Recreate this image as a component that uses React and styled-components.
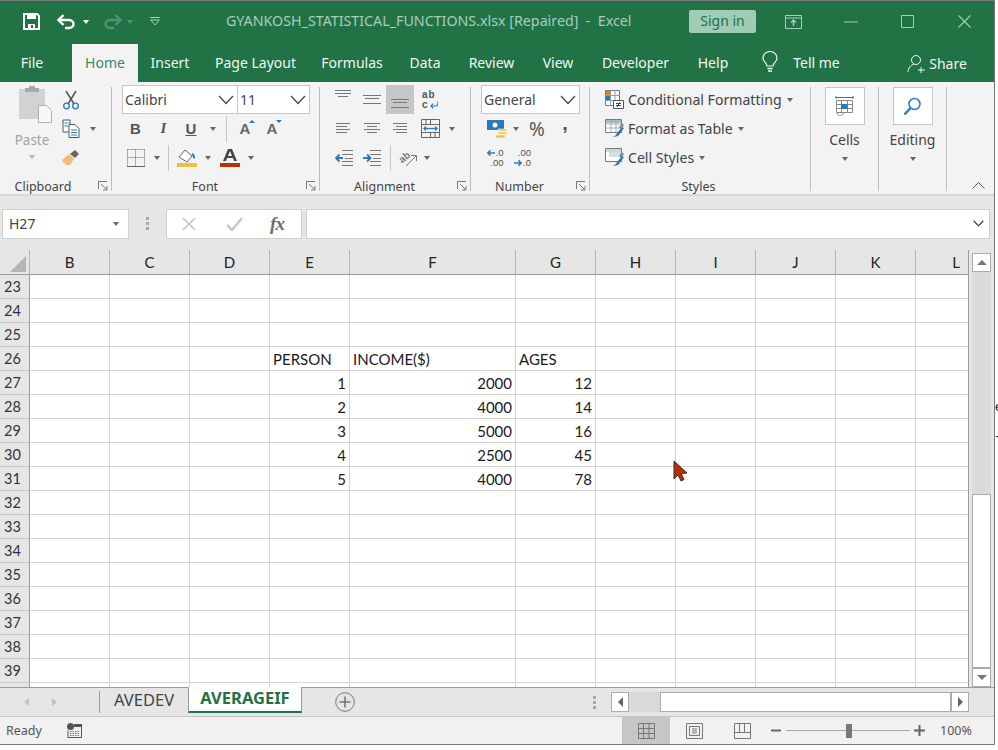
import React from "react";
import styled, { createGlobalStyle } from "styled-components";

const GREEN = "#217346";
const UI_FONT = `"Noto Sans", "Open Sans", sans-serif`;
const CELL_FONT = `Lato, "Liberation Sans", sans-serif`;

const GlobalStyle = createGlobalStyle`
  html, body { margin: 0; padding: 0; background: #fff; }
  * { box-sizing: border-box; }
`;

const COLUMNS = [
  ["B", 80], ["C", 80], ["D", 80], ["E", 80], ["F", 166], ["G", 80],
  ["H", 80], ["I", 80], ["J", 80], ["K", 80], ["L", 53],
];

const DATA = {
  26: { E: ["PERSON"], F: ["INCOME($)"], G: ["AGES"] },
  27: { E: [1, 1], F: [2000, 1], G: [12, 1] },
  28: { E: [2, 1], F: [4000, 1], G: [14, 1] },
  29: { E: [3, 1], F: [5000, 1], G: [16, 1] },
  30: { E: [4, 1], F: [2500, 1], G: [45, 1] },
  31: { E: [5, 1], F: [4000, 1], G: [78, 1] },
};

// row 40 only shows its top sliver above the sheet tabs, so no label
const ROWS = Array.from({ length: 18 }, (_, i) => 23 + i);

const Page = styled.div`
  position: relative;
  width: 998px;
  height: 750px;
  overflow: hidden;
  background: #fff;
`;

const Window = styled.div`
  width: 995px;
  height: 745px;
  display: flex;
  flex-direction: column;
  border-top: 1px solid #777;
  border-right: 1px solid #777;
  border-bottom: 1px solid #777;
  font-family: ${UI_FONT};
  background: #e6e6e6;
`;

/* title bar */
const TitleBar = styled.div`
  height: 41px;
  flex: none;
  display: flex;
  align-items: center;
  background: ${GREEN};
`;

const QatItem = styled.span`
  width: ${(p) => p.$w}px;
  margin-left: ${(p) => p.$ml || 0}px;
  flex: none;
  display: flex;
  justify-content: center;
  align-items: center;
`;

const DocTitle = styled.div`
  margin-left: 65px;
  width: 463px;
  flex: none;
  padding-bottom: 2px;
  font-size: 14.25px;
  color: #a8cdb9;
  white-space: pre;
`;

const SignIn = styled.div`
  width: 67px;
  height: 23px;
  margin-right: 9px;
  flex: none;
  border-radius: 2px;
  background: #a0ccb5;
  color: ${GREEN};
  font-size: 14px;
  line-height: 22px;
  text-align: center;
`;

const WinButton = styled.span`
  width: 57px;
  flex: none;
  display: flex;
  justify-content: center;
`;

const TabStrip = styled.div`
  height: 40px;
  flex: none;
  display: flex;
  align-items: flex-end;
  padding-left: 7px;
  background: ${GREEN};
  color: #f0f6f2;
`;

const Tab = styled.div`
  width: ${(p) => p.$w}px;
  height: 38px;
  flex: none;
  display: flex;
  align-items: center;
  justify-content: center;
  gap: ${(p) => p.$gap || 0}px;
  margin-left: ${(p) => p.$ml || 0}px;
  padding-bottom: ${(p) => (p.$low ? 0 : 2)}px;
  font-size: 14px;
  background: ${(p) => (p.$active ? "#f3f3f3" : "transparent")};
  color: ${(p) => (p.$active ? "#3d8761" : "inherit")};
`;

/* ribbon */
const Ribbon = styled.div`
  height: 114px;
  flex: none;
  display: flex;
  background: #f3f3f3;
  border-bottom: 2px solid #d9d9d9;
  color: #444;
`;

const Group = styled.div`
  width: ${(p) => p.$w}px;
  flex: none;
  display: flex;
  flex-direction: column;
`;

const GroupBody = styled.div`
  height: 94px;
  flex: none;
  padding: 3px 0 0 ${(p) => p.$pl || 0}px;
`;

const GroupLabel = styled.div`
  display: grid;
  grid-template-columns: 1fr auto 1fr;
  align-items: center;
  height: 20px;
  flex: none;
  font-size: 12.5px;
  color: #444;
  padding-right: 3px;
`;

const LabelText = styled.span`
  grid-column: 2;
  position: relative;
  left: ${(p) => p.$shift || 0}px;
`;

const Launcher = styled.span`
  grid-column: 3;
  justify-self: end;
  display: flex;
`;

const GroupSep = styled.div`
  width: 1px;
  height: 104px;
  margin-top: 5px;
  flex: none;
  background: #bdbdbd;
`;

const ToolRow = styled.div`
  height: 29px;
  display: flex;
  align-items: center;
`;

const Combo = styled.div`
  width: ${(p) => p.$w}px;
  height: 29px;
  flex: none;
  display: flex;
  align-items: center;
  justify-content: space-between;
  padding: 0 3px 0 2px;
  background: #fff;
  border: 1px solid #c6c6c6;
  border-left-width: ${(p) => (p.$joined ? 0 : 1)}px;
  font-size: 14px;
  color: #444;
`;

const Tool = styled.span`
  width: ${(p) => p.$w || 28}px;
  height: ${(p) => (p.$on ? 29 : 24)}px;
  margin-left: ${(p) => p.$ml || 0}px;
  flex: none;
  display: flex;
  align-items: center;
  justify-content: center;
  background: ${(p) => (p.$on ? "#c6c6c6" : "transparent")};
`;

const Caret = styled.span`
  width: 0;
  height: 0;
  flex: none;
  border-left: 3.5px solid transparent;
  border-right: 3.5px solid transparent;
  border-top: 4px solid ${(p) => p.$color || "#666"};
`;

const ToolSep = styled.span`
  width: 1px;
  height: 26px;
  margin: 0 4px;
  flex: none;
  background: #c6c6c6;
`;

const FontLetter = styled.span`
  font-family: ${(p) => (p.$serif ? `"Liberation Serif", serif` : `"Liberation Sans", sans-serif`)};
  font-size: 15px;
  font-weight: 700;
  font-style: ${(p) => (p.$italic ? "italic" : "normal")};
  text-decoration: ${(p) => (p.$under ? "underline" : "none")};
  color: #555;
`;

const Grow = styled.span`
  position: relative;
  font-family: "Liberation Sans", sans-serif;
  font-size: 15px;
  font-weight: 700;
  color: #666;
`;

const GrowMark = styled.span`
  position: absolute;
  top: 0;
  right: -5px;
  border-left: 3px solid transparent;
  border-right: 3px solid transparent;
  ${(p) => (p.$down ? "border-top" : "border-bottom")}: 3px solid #2b79b8;
`;

const PercentSign = styled.span`
  font-size: 19px;
  color: #555;
`;

const CommaSign = styled.span`
  font-family: "Liberation Sans", sans-serif;
  font-weight: 700;
  font-size: 20px;
  line-height: 20px;
  color: #555;
  position: relative;
  top: -6px;
`;

const Decimals = styled.span`
  width: 17px;
  display: flex;
  flex-direction: column;
  font-family: "Liberation Sans", sans-serif;
  font-size: 9.5px;
  line-height: 10px;
  color: #555;
`;

const DecimalLine = styled.span`
  display: flex;
  align-items: center;
  justify-content: flex-end;
  gap: 1px;
`;

const WrapStack = styled.span`
  display: flex;
  flex-direction: column;
  width: 16px;
  font-family: "Liberation Sans", sans-serif;
  font-size: 10px;
  font-weight: 700;
  line-height: 10px;
  letter-spacing: 1px;
  color: #555;
`;

const WrapLine = styled.span`
  display: flex;
  align-items: center;
  gap: 1px;
`;

const PasteBtn = styled.div`
  width: 40px;
  flex: none;
  display: flex;
  flex-direction: column;
  align-items: center;
  color: #a3a3a3;
  font-size: 13.5px;
  line-height: 18px;
`;

const PasteIcon = styled.span`
  display: flex;
  margin-left: 5px;
`;

const PasteLabel = styled.span`
  margin: 8px 0 6px;
`;

const ClipRow = styled.div`
  display: flex;
  padding-left: 12px;
`;

const SmallCol = styled.div`
  margin-left: 5px;
`;

const StyleRow = styled.div`
  height: 29px;
  display: flex;
  align-items: center;
  gap: 4px;
  font-size: 14.1px;
  color: #444;
`;

const StyleCaret = styled(Caret)`
  margin-left: 1px;
`;

const BigGroupBody = styled.div`
  height: 94px;
  flex: none;
  padding-top: 5px;
  display: flex;
  flex-direction: column;
  align-items: center;
  font-size: 14px;
  color: #444;
`;

const BigIcon = styled.div`
  width: 40px;
  height: 38px;
  margin-bottom: 5px;
  display: flex;
  align-items: center;
  justify-content: center;
  background: #fff;
  border: 1px solid #c6c6c6;
`;

const BigCaret = styled(Caret)`
  margin-top: 8px;
`;

const CollapseSlot = styled.div`
  flex: 1;
  display: flex;
  justify-content: flex-end;
  align-items: flex-end;
  padding: 0 9px 5px 0;
`;

/* formula bar */
const FormulaBar = styled.div`
  height: 54px;
  flex: none;
  display: flex;
  align-items: center;
  padding: 1px 4px 0 2px;
  background: #e6e6e6;
`;

const FieldBox = styled.div`
  height: 30px;
  width: ${(p) => (p.$w ? `${p.$w}px` : "auto")};
  flex: ${(p) => (p.$w ? "none" : "1")};
  display: flex;
  align-items: center;
  background: #fff;
  border: 1px solid #d0d0d0;
`;

const NameBox = styled(FieldBox)`
  justify-content: space-between;
  padding: 0 9px 0 6px;
  font-size: 14px;
  color: #444;
`;

const Grip = styled.span`
  width: 37px;
  flex: none;
  display: flex;
  flex-direction: column;
  align-items: center;
  gap: 2px;
  i {
    width: 3px;
    height: 3px;
    background: #a8a8a8;
  }
`;

const FnButton = styled.span`
  width: ${(p) => p.$w}px;
  flex: none;
  display: flex;
  justify-content: center;
  font-family: "Liberation Serif", serif;
  font-style: italic;
  font-weight: 700;
  font-size: 19px;
  letter-spacing: -1px;
  color: #6e6e6e;
`;

const FormulaInput = styled(FieldBox)`
  margin-left: 4px;
  justify-content: flex-end;
  padding-right: 5px;
`;

/* sheet */
const SheetArea = styled.div`
  height: 437px;
  flex: none;
  display: flex;
`;

const SheetGrid = styled.div`
  width: 969px;
  height: 437px;
  flex: none;
  overflow: hidden;
  display: grid;
  grid-template-columns: 30px ${COLUMNS.map((c) => `${c[1]}px`).join(" ")};
  grid-template-rows: 25px repeat(18, 24px);
  background: #fff;
  border-right: 1px solid #9b9b9b;
  font-family: ${CELL_FONT};
  font-size: 15px;
`;

const Corner = styled.div`
  display: flex;
  align-items: flex-end;
  justify-content: flex-end;
  padding: 0 3px 2px 0;
  background: #e6e6e6;
  border-right: 1px solid #b5b5b5;
  border-bottom: 1px solid #9b9b9b;
`;

const ColHead = styled.div`
  display: flex;
  align-items: center;
  justify-content: center;
  padding-left: ${(p) => (p.$last ? 27 : 0)}px;
  font-size: 15px;
  color: #222;
  background: #e6e6e6;
  border-right: ${(p) => (p.$last ? 0 : 1)}px solid #b5b5b5;
  border-bottom: 1px solid #9b9b9b;
`;

const RowHead = styled.div`
  display: flex;
  align-items: center;
  padding-left: 4px;
  font-size: 14.5px;
  color: #333;
  background: #e6e6e6;
  border-right: 1px solid #9b9b9b;
  border-bottom: 1px solid #c8c8c8;
`;

const Cell = styled.div`
  display: flex;
  align-items: center;
  justify-content: ${(p) => (p.$num ? "flex-end" : "flex-start")};
  padding: 0 3px;
  color: #1a1a1a;
  white-space: nowrap;
  border-right: ${(p) => (p.$last ? 0 : 1)}px solid #d4d4d4;
  border-bottom: 1px solid #d4d4d4;
`;

const VScroll = styled.div`
  flex: 1;
  padding: 3px 3px 0;
  display: flex;
  flex-direction: column;
  background: #e6e6e6;
`;

const VTrack = styled.div`
  flex: 1;
  display: flex;
  flex-direction: column;
  background: #dadada;
`;

const VThumb = styled.div`
  height: 174px;
  margin-top: auto;
  background: #fff;
  border: 1px solid #ababab;
`;

const ScrollBtn = styled.div`
  width: ${(p) => p.$w || 19}px;
  height: ${(p) => p.$h || 19}px;
  flex: none;
  display: flex;
  align-items: center;
  justify-content: center;
  background: #fff;
  border: 1px solid #ababab;
`;

const Arrow = styled.span`
  width: 0;
  height: 0;
  ${(p) =>
    ({
      up: "border-left:5px solid transparent;border-right:5px solid transparent;border-bottom:5px solid #777;",
      down: "border-left:5px solid transparent;border-right:5px solid transparent;border-top:5px solid #777;",
      left: "border-top:5px solid transparent;border-bottom:5px solid transparent;border-right:5px solid #666;",
      right: "border-top:5px solid transparent;border-bottom:5px solid transparent;border-left:5px solid #666;",
    })[p.$dir]}
`;

/* sheet tabs */
const SheetBar = styled.div`
  height: 29px;
  flex: none;
  display: flex;
  align-items: stretch;
  background: #e6e6e6;
  border-top: 1px solid #9b9b9b;
  position: relative;
`;

const NavArrows = styled.div`
  width: 99px;
  flex: none;
  display: flex;
  align-items: center;
  gap: 23px;
  padding-left: 24px;
`;

const NavArrow = styled.span`
  width: 0;
  height: 0;
  border-top: 4px solid transparent;
  border-bottom: 4px solid transparent;
  ${(p) => (p.$right ? "border-left" : "border-right")}: 5px solid #c0c0c0;
`;

const SheetTab = styled.div`
  width: ${(p) => p.$w}px;
  height: ${(p) => (p.$active ? 26 : 22)}px;
  margin-top: ${(p) => (p.$active ? -1 : 3)}px;
  flex: none;
  display: flex;
  align-items: center;
  justify-content: center;
  padding-bottom: ${(p) => (p.$active ? 3 : 5)}px;
  font-size: 16.5px;
  font-weight: ${(p) => (p.$active ? 700 : 400)};
  color: ${(p) => (p.$active ? GREEN : "#444")};
  background: ${(p) => (p.$active ? "#fff" : "transparent")};
  border-left: 1px solid #9b9b9b;
  border-right: ${(p) => (p.$active ? "1px solid #9b9b9b" : "0")};
  border-bottom: ${(p) => (p.$active ? `2px solid ${GREEN}` : "0")};
`;

const AddSheet = styled.div`
  width: 86px;
  flex: none;
  display: flex;
  align-items: center;
  justify-content: center;
`;

const DotGrip = styled(Grip)`
  width: 18px;
  margin-left: 197px;
  justify-content: center;
`;

const HScroll = styled.div`
  width: 358px;
  height: 20px;
  margin-top: 4px;
  margin-left: 8px;
  flex: none;
  display: flex;
  background: #d9d9d9;
`;

const HThumb = styled.div`
  width: 291px;
  margin-left: 31px;
  flex: none;
  background: #fff;
  border: 1px solid #ababab;
`;

/* status bar */
const StatusBar = styled.div`
  flex: 1;
  display: flex;
  align-items: center;
  background: #f1f1f1;
  border-top: 1px solid #c6c6c6;
  font-size: 12.5px;
  color: #555;
`;

const Ready = styled.span`
  width: 67px;
  flex: none;
  padding-left: 6px;
`;

const MacroSlot = styled.span`
  width: 555px;
  flex: none;
  display: flex;
`;

const ViewBtn = styled.span`
  width: 48px;
  height: 100%;
  flex: none;
  display: flex;
  align-items: center;
  justify-content: center;
  background: ${(p) => (p.$on ? "#c6c6c6" : "transparent")};
`;

const ZoomSignSlot = styled.span`
  margin-left: ${(p) => p.$ml || 0}px;
  flex: none;
  display: flex;
`;

const ZoomSlider = styled.div`
  width: 124px;
  height: 11px;
  margin: 0 4px;
  flex: none;
  display: flex;
  justify-content: center;
  align-items: center;
  background: linear-gradient(#a8a8a8, #a8a8a8) center / 100% 1px no-repeat;
`;

const ZoomThumb = styled.span`
  width: 6px;
  height: 14px;
  margin-left: 1px;
  background: #777;
`;

const ZoomPct = styled.span`
  margin-left: 15px;
  font-size: 12.5px;
  color: #555;
`;

/* things lying over the window */
const Pointer = styled.svg`
  position: absolute;
  left: 672px;
  top: 460px;
`;

const OffWindow = styled.span`
  position: absolute;
  left: 995px;
  top: ${(p) => p.$top}px;
  font-family: ${CELL_FONT};
  font-size: 14px;
  line-height: 14px;
  color: #222;
`;

/* icons */
const Save = () => (
  <svg width="17" height="17" viewBox="0 0 17 17">
    <path d="M1 1h13l2 2v13H1z" fill="none" stroke="#fff" strokeWidth="2" />
    <path d="M4 1h9v5H4zM5 11h7v5H5z" fill="#fff" />
    <path d="M8 12h2v3H8z" fill={GREEN} />
  </svg>
);
const Undo = ({ color = "#fff" }) => (
  <svg width="19" height="16" viewBox="0 0 19 16">
    <path d="M1 6h11c6 0 6 8 0 8H8" fill="none" stroke={color} strokeWidth="2.4" />
    <path d="M6.5 1 1.5 6l5 5" fill="none" stroke={color} strokeWidth="2.4" />
  </svg>
);
const Redo = () => (
  <svg width="19" height="16" viewBox="0 0 19 16">
    <path d="M18 6H7c-6 0-6 8 0 8h4" fill="none" stroke="#4f9472" strokeWidth="2.4" />
    <path d="m12.5 1 5 5-5 5" fill="none" stroke="#4f9472" strokeWidth="2.4" />
  </svg>
);
const Customize = () => (
  <svg width="10" height="9" viewBox="0 0 10 9">
    <path d="M0 .5h10M.7 3l4.3 5 4.3-5z" fill="none" stroke="#a8cdb9" />
  </svg>
);
const Restore = () => (
  <svg width="17" height="14" viewBox="0 0 17 14" fill="none" stroke="#a8cdb9">
    <path d="M.5.5h16v13H.5zM1 3h15" />
    <path d="M8.5 11V5M6 7.5 8.5 5 11 7.5" strokeWidth="1.4" />
  </svg>
);
const Minimize = () => (
  <svg width="14" height="2" viewBox="0 0 14 2">
    <path d="M0 1h14" stroke="#a8cdb9" />
  </svg>
);
const Maximize = () => (
  <svg width="13" height="13" viewBox="0 0 13 13">
    <path d="M.5.5h12v12H.5z" fill="none" stroke="#a8cdb9" />
  </svg>
);
const Close = () => (
  <svg width="13" height="13" viewBox="0 0 13 13">
    <path d="m.5.5 12 12M12.5.5l-12 12" stroke="#a8cdb9" strokeWidth="1.1" />
  </svg>
);
const Bulb = () => (
  <svg width="16" height="22" viewBox="0 0 16 22" fill="none" stroke="#f0f6f2">
    <path d="M5 15c0-3-4-4-4-8a7 6.5 0 0 1 14 0c0 4-4 5-4 8z" strokeWidth="1.2" />
    <path d="M5.5 17.5h5M6 20h4" strokeWidth="1.3" />
  </svg>
);
const Person = () => (
  <svg width="19" height="19" viewBox="0 0 19 19" fill="none" stroke="#f0f6f2">
    <circle cx="9" cy="6" r="4.5" />
    <path d="M1 18c0-4 3-7 6-8M14 13v6M11 16h7" />
  </svg>
);
const Chevron = ({ small }) => (
  <svg width={small ? 11 : 16} height={small ? 7 : 10} viewBox="0 0 16 10">
    <path d="m1 1 7 7.5L15 1" fill="none" stroke="#444" strokeWidth={small ? 1.8 : 1.2} />
  </svg>
);
const LauncherIcon = () => (
  <svg width="10" height="10" viewBox="0 0 10 10" fill="none" stroke="#777">
    <path d="M.5 8V.5H9" />
    <path d="m3 3 5.5 5.5M9 5v4H5" />
  </svg>
);
const ClipBoard = () => (
  <svg width="36" height="38" viewBox="0 0 36 38">
    <path d="M2 4h26v30H2z" fill="#d2d2d2" />
    <path d="M8 3h4V1h6v2h4v4H8z" fill="#a8a8a8" />
    <path d="M21.5 20.5h8l5 5v12h-13z" fill="#f7f7f7" stroke="#b0b0b0" />
  </svg>
);
const Scissors = () => (
  <svg width="18" height="20" viewBox="0 0 18 20" fill="none">
    <path d="m4 1 8 13M14 1 6 14" stroke="#555" strokeWidth="1.5" />
    <circle cx="4.5" cy="16" r="2.8" stroke="#2b79b8" strokeWidth="1.3" />
    <circle cx="13.5" cy="16" r="2.8" stroke="#2b79b8" strokeWidth="1.3" />
  </svg>
);
const Copy = () => (
  <svg width="18" height="19" viewBox="0 0 18 19" fill="none">
    <path d="M1 1h7v12H1z" fill="#fff" stroke="#555" />
    <path d="M7 5.5h6l4 4v9H7z" fill="#fff" stroke="#555" />
    <path d="M2.5 4h4M2.5 7h4M9 11h6M9 13.5h6M9 16h6" stroke="#2b79b8" />
  </svg>
);
const Brush = () => (
  <svg width="18" height="17" viewBox="0 0 18 17">
    <path d="M0 11 7 5l5 5-4 6c-3 1-6-1-8-5z" fill="#eebe79" />
    <path d="m8 5 5-4 4 4-4 4z" fill="#666" />
  </svg>
);
const Borders = () => (
  <svg width="18" height="18" viewBox="0 0 18 18" fill="none" stroke="#666">
    <path d="M.5.5h17M.5.5v17M17.5.5v17M8.5.5v17M.5 8.5h17" strokeDasharray="1 1" />
    <path d="M0 17.5h18" />
  </svg>
);
const FillColor = () => (
  <svg width="20" height="19" viewBox="0 0 20 19">
    <path d="m2 9 6-7 7 6-5 6z" fill="#fff" stroke="#666" />
    <path d="M15 5c3 1 4 5 2 6-1-2-2-3-2-6z" fill="#2b79b8" />
    <path d="M0 15h20v4H0z" fill="#ecc13c" />
  </svg>
);
const FontColor = () => (
  <svg width="20" height="19" viewBox="0 0 20 19">
    <path d="M8 1h4l5 12h-3l-1-3H7l-1 3H3zm2 2L8 8h4z" fill="#444" fillRule="evenodd" />
    <path d="M0 15h20v4H0z" fill="#be2f00" />
  </svg>
);
const Lines = ({ rows }) => (
  <svg width="18" height="20" viewBox="0 0 18 20">
    {rows.map(([y, x1, x2]) => (
      <path key={y} d={`M${x1} ${y}.5H${x2}`} stroke="#777" />
    ))}
  </svg>
);
const WrapArrow = () => (
  <svg width="9" height="8" viewBox="0 0 9 8" fill="none" stroke="#2b79b8" strokeWidth="1.2">
    <path d="M8.5 0v2.5c0 1.5-1 2.5-2.5 2.5H1M3.5 2.5 1 5l2.5 2.5" />
  </svg>
);
const Merge = () => (
  <svg width="19" height="19" viewBox="0 0 19 19" fill="none">
    <path d="M.5.5h18v18H.5zM.5 5.5h18M.5 13.5h18M9.5.5v5M9.5 13.5v5M5 .5v5M14 13.5v5" stroke="#666" />
    <path d="M3 9.5h13" stroke="#2b79b8" strokeWidth="1.3" />
    <path d="M5 7.5l-2 2 2 2M14 7.5l2 2-2 2" stroke="#2b79b8" strokeWidth="1.3" />
  </svg>
);
const Indent = ({ flip }) => (
  <svg width="18" height="16" viewBox="0 0 18 16" fill="none">
    <path d="M7 .5h11M7 4.5h11M10 8.5h8M7 11.5h11M7 15.5h11" stroke="#777" />
    {flip ? (
      <path d="M0 8h7M4 4.5 7.5 8 4 11.5" stroke="#2b79b8" strokeWidth="1.8" />
    ) : (
      <path d="M8 8H1M4.5 4.5 1 8l3.500 3.500" stroke="#2b79b8" strokeWidth="1.8" />
    )}
  </svg>
);
const Orientation = () => (
  <svg width="20" height="18" viewBox="0 0 20 18">
    <text
      x="1"
      y="12"
      transform="rotate(-38 6 9)"
      fontFamily="Liberation Sans, sans-serif"
      fontSize="10"
      fontWeight="700"
      fill="#777"
    >
      ab
    </text>
    <path d="m8 17 10-10M13 6.500h5.500V12" fill="none" stroke="#777" />
  </svg>
);
const Currency = () => (
  <svg width="21" height="20" viewBox="0 0 21 20">
    <path d="M0 1h17v10H0z" fill="#2b79b8" />
    <circle cx="8" cy="6" r="2.5" fill="#fff" />
    <path d="M11 10h9v2h-9zM11 13h9v2h-9zM9 16h9v3H9z" fill="#ecc13c" stroke="#fff" strokeWidth=".5" />
  </svg>
);
const DecimalArrow = ({ right }) => (
  <svg width="8" height="8" viewBox="0 0 9 8" fill="none" stroke="#2b79b8" strokeWidth="1.7">
    {right ? <path d="M0 4h8M5 1l3 3-3 3" /> : <path d="M9 4H1M4 1 1 4l3 3" />}
  </svg>
);
const CondFormat = () => (
  <svg width="19" height="19" viewBox="0 0 19 19" fill="none">
    <path d="M.5.5h14v15H.5z" stroke="#777" fill="#fff" />
    <path d="M1 1h5v4H1z" fill="#d08b3a" />
    <path d="M1 6h5v4H1z" fill="#2b79b8" />
    <path d="M5.5.5v15M10 .5v15M.5 5.5h14M.5 10.5h14" stroke="#999" />
    <path d="M8.5 10.5h10v8h-10z" fill="#fff" stroke="#555" />
    <path d="M11 13.5h5M11 15.5h5M12 17l3-5" stroke="#444" />
  </svg>
);
const FormatTable = ({ plain }) => (
  <svg width="19" height="19" viewBox="0 0 19 19" fill="none">
    <path d="M.5.5h16v13H.5z" stroke="#777" fill="#fff" />
    <path d="M1 1h15v3H1z" fill={plain ? "#c9dbd6" : "#9fbfc9"} />
    {plain ? (
      <path d="M4 4h12v5H4z" fill="#cfe0e4" />
    ) : (
      <path d="M6 .5v13M11 .5v13M.5 5h16M.5 9h16" stroke="#aaa" />
    )}
    <path d="M7 17c3 1 4-1 5-3l5-6 2 1-5 7c-2 2-5 2-7 1z" fill="#2b79b8" />
    <path d="m14 8 3-4 2 2-3 4z" fill="#888" />
  </svg>
);
const CellsIcon = () => (
  <svg width="19" height="21" viewBox="0 0 19 21" fill="none">
    <path d="M1 1.5h17M1 0v3M18 0v3" stroke="#2b79b8" />
    <path d="M1.5 4.5h16v12h-16zM1.5 8.5h16M1.5 12.5h16M6.5 4.5v12M12.5 4.5v12" stroke="#888" />
    <path d="M6.5 8h6v5h-6z" fill="#2b79b8" />
    <path d="M2 17c0 2 3 3 5 2l2-2" stroke="#999" />
  </svg>
);
const Magnifier = () => (
  <svg width="19" height="19" viewBox="0 0 19 19" fill="none" stroke="#2b79b8">
    <circle cx="11.5" cy="7" r="5.5" strokeWidth="1.5" />
    <path d="M7.5 11 1.5 17.5" strokeWidth="2.5" />
  </svg>
);
const CollapseChevron = () => (
  <svg width="13" height="7" viewBox="0 0 13 7">
    <path d="m.5 6.5 6-6 6 6" fill="none" stroke="#555" />
  </svg>
);
const Cross = () => (
  <svg width="14" height="14" viewBox="0 0 14 14">
    <path d="m1 1 12 12M13 1 1 13" stroke="#c6c6c6" strokeWidth="1.6" />
  </svg>
);
const Tick = () => (
  <svg width="17" height="14" viewBox="0 0 17 14">
    <path d="m1 8 5 5L16 1" fill="none" stroke="#c6c6c6" strokeWidth="2.4" />
  </svg>
);
const CornerMark = () => (
  <svg width="16" height="16" viewBox="0 0 16 16">
    <path d="M16 0v16H0z" fill="#b5b5b5" />
  </svg>
);
const AddCircle = () => (
  <svg width="20" height="20" viewBox="0 0 20 20" fill="none" stroke="#777">
    <circle cx="10" cy="10" r="9.3" />
    <path d="M10 4.5v11M4.5 10h11" strokeWidth="1.6" />
  </svg>
);
const Macro = () => (
  <svg width="15" height="15" viewBox="0 0 15 15">
    <circle cx="3.5" cy="3.5" r="3.5" fill="#555" />
    <path d="M1 7.5v7h13.5V1.5H7" fill="none" stroke="#555" />
    <path d="M7 1h8v3H7z" fill="#555" />
    <path d="M3 8.5h10M3 10.5h10M3 12.5h10" stroke="#777" strokeDasharray="1.5 1" />
  </svg>
);
const NormalView = () => (
  <svg width="17" height="16" viewBox="0 0 17 16" fill="none" stroke="#777">
    <path d="M.5.5h16v15H.5zM.5 5.5h16M.5 10.5h16M5.5.5v15M11 .5v15" />
  </svg>
);
const PageView = () => (
  <svg width="17" height="16" viewBox="0 0 17 16" fill="none" stroke="#777">
    <path d="M.5.5h16v15H.5z" />
    <path d="M3.5 3.5h10v9h-10zM6 6h5M6 8h5M6 10h5" />
  </svg>
);
const BreakView = () => (
  <svg width="17" height="16" viewBox="0 0 17 16" fill="none" stroke="#777">
    <path d="M.5.5h16v15H.5zM.5 9.5h10v-9M5.5.5v9M10.5 9.5h6" />
  </svg>
);
const ZoomSign = ({ plus }) => (
  <svg width="11" height="11" viewBox="0 0 11 11">
    <path d={plus ? "M0 5.5h11M5.5 0v11" : "M0 5.5h10"} stroke="#666" strokeWidth="2" />
  </svg>
);

const L_TOP = [[0, 0, 16], [3, 0, 16], [6, 3, 13]];
const L_MID = [[5, 0, 18], [8, 2, 16], [13, 0, 18]];
const L_BOT = [[9, 0, 18], [12, 2, 16], [17, 0, 18]];
const A_LEFT = [[4, 1, 15], [7, 1, 12], [10, 1, 15], [13, 1, 12]];
const A_CENTER = [[4, 1, 17], [7, 4, 14], [10, 1, 17], [13, 4, 14]];
const A_RIGHT = [[4, 2, 16], [7, 5, 16], [10, 2, 16], [13, 5, 16]];

const GroupFoot = ({ label, launcher, shift }) => (
  <GroupLabel>
    <LabelText $shift={shift}>{label}</LabelText>
    {launcher && (
      <Launcher>
        <LauncherIcon />
      </Launcher>
    )}
  </GroupLabel>
);

const TitleRow = () => (
  <TitleBar>
    <QatItem $w={18} $ml={22}><Save /></QatItem>
    <QatItem $w={19} $ml={17}><Undo /></QatItem>
    <QatItem $w={10} $ml={5}><Caret $color="#fff" /></QatItem>
    <QatItem $w={19} $ml={12}><Redo /></QatItem>
    <QatItem $w={10} $ml={3}><Caret $color="#4f9472" /></QatItem>
    <QatItem $w={12} $ml={14}><Customize /></QatItem>
    <DocTitle>{"GYANKOSH_STATISTICAL_FUNCTIONS.xlsx [Repaired]  -  Excel"}</DocTitle>
    <SignIn>Sign in</SignIn>
    <WinButton><Restore /></WinButton>
    <WinButton><Minimize /></WinButton>
    <WinButton><Maximize /></WinButton>
    <WinButton><Close /></WinButton>
  </TitleBar>
);

const TabsRow = () => (
  <TabStrip>
    <Tab $w={50}>File</Tab>
    <Tab $w={66} $ml={15} $active>Home</Tab>
    <Tab $w={64}>Insert</Tab>
    <Tab $w={107}>Page Layout</Tab>
    <Tab $w={86}>Formulas</Tab>
    <Tab $w={60}>Data</Tab>
    <Tab $w={73}>Review</Tab>
    <Tab $w={60}>View</Tab>
    <Tab $w={95}>Developer</Tab>
    <Tab $w={60}>Help</Tab>
    <Tab $w={100} $ml={8} $gap={15}><Bulb />Tell me</Tab>
    <Tab $w={62} $ml={55} $gap={3} $low><Person />Share</Tab>
  </TabStrip>
);

const ClipboardGroup = () => (
  <Group $w={111}>
    <GroupBody>
      <ClipRow>
        <PasteBtn>
          <PasteIcon><ClipBoard /></PasteIcon>
          <PasteLabel>Paste</PasteLabel>
          <Caret $color="#b5b5b5" />
        </PasteBtn>
        <SmallCol>
          <ToolRow><Tool><Scissors /></Tool></ToolRow>
          <ToolRow><Tool><Copy /></Tool><Tool $w={16}><Caret /></Tool></ToolRow>
          <ToolRow><Tool><Brush /></Tool></ToolRow>
        </SmallCol>
      </ClipRow>
    </GroupBody>
    <GroupFoot label="Clipboard" launcher shift={-11} />
  </Group>
);

const FontGroup = () => (
  <Group $w={207}>
    <GroupBody $pl={10}>
      <ToolRow>
        <Combo $w={116}>Calibri<Chevron /></Combo>
        <Combo $w={72} $joined>11<Chevron /></Combo>
      </ToolRow>
      <ToolRow>
        <Tool $w={27}><FontLetter>B</FontLetter></Tool>
        <Tool $w={29}><FontLetter $serif $italic>I</FontLetter></Tool>
        <Tool $w={26}><FontLetter $under>U</FontLetter></Tool>
        <Tool $w={18}><Caret /></Tool>
        <ToolSep />
        <Tool><Grow>A<GrowMark /></Grow></Tool>
        <Tool $w={26}><Grow>A<GrowMark $down /></Grow></Tool>
      </ToolRow>
      <ToolRow>
        <Tool><Borders /></Tool>
        <Tool $w={14}><Caret /></Tool>
        <ToolSep />
        <Tool><FillColor /></Tool>
        <Tool $w={14}><Caret /></Tool>
        <Tool $w={30}><FontColor /></Tool>
        <Tool $w={12}><Caret /></Tool>
      </ToolRow>
    </GroupBody>
    <GroupFoot label="Font" launcher shift={-9} />
  </Group>
);

const AlignmentGroup = () => (
  <Group $w={150}>
    <GroupBody $pl={10}>
      <ToolRow>
        <Tool><Lines rows={L_TOP} /></Tool>
        <Tool><Lines rows={L_MID} /></Tool>
        <Tool $on><Lines rows={L_BOT} /></Tool>
        <Tool $w={32}>
          <WrapStack>
            <span>ab</span>
            <WrapLine>c<WrapArrow /></WrapLine>
          </WrapStack>
        </Tool>
      </ToolRow>
      <ToolRow>
        <Tool><Lines rows={A_LEFT} /></Tool>
        <Tool><Lines rows={A_CENTER} /></Tool>
        <Tool><Lines rows={A_RIGHT} /></Tool>
        <Tool $w={32}><Merge /></Tool>
        <Tool $w={12}><Caret /></Tool>
      </ToolRow>
      <ToolRow>
        <Tool><Indent /></Tool>
        <Tool><Indent flip /></Tool>
        <ToolSep />
        <Tool $w={25}><Orientation /></Tool>
        <Tool $w={14}><Caret /></Tool>
      </ToolRow>
    </GroupBody>
    <GroupFoot label="Alignment" launcher shift={-9} />
  </Group>
);

const NumberGroup = () => (
  <Group $w={118}>
    <GroupBody $pl={10}>
      <ToolRow>
        <Combo $w={99}>General<Chevron /></Combo>
      </ToolRow>
      <ToolRow>
        <Tool $w={32}><Currency /></Tool>
        <Tool $w={6}><Caret /></Tool>
        <Tool $ml={4}><PercentSign>%</PercentSign></Tool>
        <Tool><CommaSign>,</CommaSign></Tool>
      </ToolRow>
      <ToolRow>
        <Tool>
          <Decimals>
            <DecimalLine><DecimalArrow />.0</DecimalLine>
            <DecimalLine>.00</DecimalLine>
          </Decimals>
        </Tool>
        <Tool $w={27}>
          <Decimals>
            <DecimalLine>.00</DecimalLine>
            <DecimalLine><DecimalArrow right />.0</DecimalLine>
          </Decimals>
        </Tool>
      </ToolRow>
    </GroupBody>
    <GroupFoot label="Number" launcher shift={-9} />
  </Group>
);

const StylesGroup = () => (
  <Group $w={220}>
    <GroupBody $pl={15}>
      <StyleRow><CondFormat />Conditional Formatting<StyleCaret /></StyleRow>
      <StyleRow><FormatTable />Format as Table<StyleCaret /></StyleRow>
      <StyleRow><FormatTable plain />Cell Styles<StyleCaret /></StyleRow>
    </GroupBody>
    <GroupFoot label="Styles" />
  </Group>
);

const RibbonRow = () => (
  <Ribbon>
    <ClipboardGroup />
    <GroupSep />
    <FontGroup />
    <GroupSep />
    <AlignmentGroup />
    <GroupSep />
    <NumberGroup />
    <GroupSep />
    <StylesGroup />
    <GroupSep />
    <Group $w={67}>
      <BigGroupBody>
        <BigIcon><CellsIcon /></BigIcon>
        Cells
        <BigCaret />
      </BigGroupBody>
    </Group>
    <GroupSep />
    <Group $w={67}>
      <BigGroupBody>
        <BigIcon><Magnifier /></BigIcon>
        Editing
        <BigCaret />
      </BigGroupBody>
    </Group>
    <GroupSep />
    <CollapseSlot><CollapseChevron /></CollapseSlot>
  </Ribbon>
);

const FormulaRow = () => (
  <FormulaBar>
    <NameBox $w={127}>H27<Caret /></NameBox>
    <Grip><i /><i /><i /></Grip>
    <FieldBox $w={136}>
      <FnButton $w={44}><Cross /></FnButton>
      <FnButton $w={47}><Tick /></FnButton>
      <FnButton $w={38}>fx</FnButton>
    </FieldBox>
    <FormulaInput><Chevron small /></FormulaInput>
  </FormulaBar>
);

const Sheet = () => (
  <SheetArea>
    <SheetGrid>
      <Corner><CornerMark /></Corner>
      {COLUMNS.map(([name], i) => (
        <ColHead key={name} $last={i === COLUMNS.length - 1}>{name}</ColHead>
      ))}
      {ROWS.map((row) => (
        <React.Fragment key={row}>
          <RowHead>{row < 40 ? row : null}</RowHead>
          {COLUMNS.map(([name], i) => {
            const cell = DATA[row] && DATA[row][name];
            return (
              <Cell key={name} $num={cell && cell[1]} $last={i === COLUMNS.length - 1}>
                {cell && cell[0]}
              </Cell>
            );
          })}
        </React.Fragment>
      ))}
    </SheetGrid>
    <VScroll>
      <ScrollBtn><Arrow $dir="up" /></ScrollBtn>
      <VTrack><VThumb /></VTrack>
      <ScrollBtn><Arrow $dir="down" /></ScrollBtn>
    </VScroll>
  </SheetArea>
);

const SheetTabs = () => (
  <SheetBar>
    <NavArrows><NavArrow /><NavArrow $right /></NavArrows>
    <SheetTab $w={89}>AVEDEV</SheetTab>
    <SheetTab $w={114} $active>AVERAGEIF</SheetTab>
    <AddSheet><AddCircle /></AddSheet>
    <DotGrip><i /><i /><i /></DotGrip>
    <HScroll>
      <ScrollBtn $w={18} $h={20}><Arrow $dir="left" /></ScrollBtn>
      <HThumb />
      <ScrollBtn $w={18} $h={20}><Arrow $dir="right" /></ScrollBtn>
    </HScroll>
  </SheetBar>
);

const Status = () => (
  <StatusBar>
    <Ready>Ready</Ready>
    <MacroSlot><Macro /></MacroSlot>
    <ViewBtn $on><NormalView /></ViewBtn>
    <ViewBtn><PageView /></ViewBtn>
    <ViewBtn><BreakView /></ViewBtn>
    <ZoomSignSlot $ml={5}><ZoomSign /></ZoomSignSlot>
    <ZoomSlider><ZoomThumb /></ZoomSlider>
    <ZoomSignSlot><ZoomSign plus /></ZoomSignSlot>
    <ZoomPct>100%</ZoomPct>
  </StatusBar>
);

export default function App() {
  return (
    <Page>
      <GlobalStyle />
      <Window>
        <TitleRow />
        <TabsRow />
        <RibbonRow />
        <FormulaRow />
        <Sheet />
        <SheetTabs />
        <Status />
      </Window>
      <Pointer width="16" height="22" viewBox="0 0 16 22">
        <path d="M2 1v18l4-4 3 6 3-1.5-3-6 6-.5z" fill="#b93000" stroke="#333" />
      </Pointer>
      <OffWindow $top={399}>e</OffWindow>
      <OffWindow $top={429}>-</OffWindow>
    </Page>
  );
}
